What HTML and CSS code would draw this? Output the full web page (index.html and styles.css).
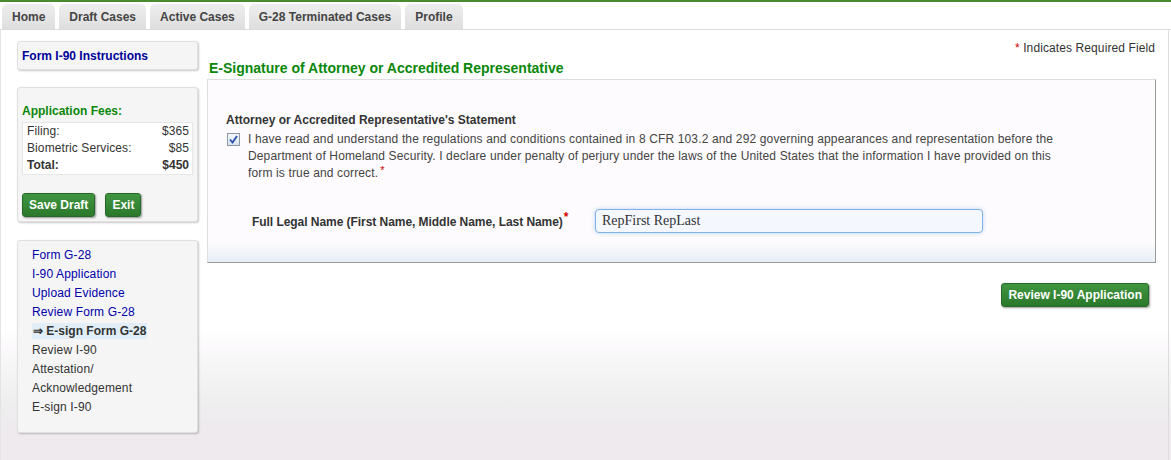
FILE: index.html
```html
<!DOCTYPE html>
<html lang="en">
<head>
    <meta charset="UTF-8">
    <title>E-Signature of Attorney</title>
    <link rel="stylesheet" href="styles.css">
</head>
<body>

<div class="topline"></div>

<!-- Tabs -->
<nav class="tabs">
    <a class="tab" href="#">Home</a>
    <a class="tab" href="#">Draft Cases</a>
    <a class="tab" href="#">Active Cases</a>
    <a class="tab" href="#">G-28 Terminated Cases</a>
    <a class="tab" href="#">Profile</a>
</nav>

<div class="page">
    <aside class="sidebar">
        <div class="box instr">
            <a href="#">Form I-90 Instructions</a>
        </div>

        <div class="box fees">
            <h3>Application Fees:</h3>
            <div class="fee-table">
                <div class="fee-row"><span>Filing:</span><span>$365</span></div>
                <div class="fee-row"><span>Biometric Services:</span><span>$85</span></div>
                <div class="fee-row total"><span>Total:</span><span>$450</span></div>
            </div>
            <div class="fee-actions">
                <button class="btn" type="button">Save Draft</button>
                <button class="btn" type="button">Exit</button>
            </div>
        </div>

        <div class="box steps">
            <ul>
                <li><a href="#">Form G-28</a></li>
                <li><a href="#">I-90 Application</a></li>
                <li><a href="#">Upload Evidence</a></li>
                <li><a href="#">Review Form G-28</a></li>
                <li class="current"><span>&rArr; E-sign Form G-28</span></li>
                <li>Review I-90</li>
                <li>Attestation/ Acknowledgement</li>
                <li>E-sign I-90</li>
            </ul>
        </div>
    </aside>

    <main class="content">
        <p class="req"><span class="star">*</span> Indicates Required Field</p>
        <h2 class="title">E-Signature of Attorney or Accredited Representative</h2>

        <section class="panel">
            <h4>Attorney or Accredited Representative's Statement</h4>
            <div class="statement">
                <span class="check">
                    <svg width="9" height="9" viewBox="0 0 9 9"><path d="M1 4.5 L3.5 7.5 L8 1" fill="none" stroke="#2a4fa8" stroke-width="1.8"/></svg>
                </span>
                <p>I have read and understand the regulations and conditions contained in 8 CFR 103.2 and 292 governing appearances and representation before the Department of Homeland Security. I declare under penalty of perjury under the laws of the United States that the information I have provided on this form is true and correct.<span class="star mark">*</span></p>
            </div>
            <div class="name-row">
                <label for="fullName">Full Legal Name (First Name, Middle Name, Last Name)<span class="star mark high">*</span></label>
                <input type="text" id="fullName" value="RepFirst RepLast">
            </div>
        </section>

        <div class="next">
            <button class="btn" type="button">Review I-90 Application</button>
        </div>
    </main>
</div>

</body>
</html>
```

FILE: styles.css
```css
body {
    margin: 0;
    font-family: "Liberation Sans", Arial, sans-serif;
    font-size: 12px;
    color: #333;
    min-height: 460px;
    background: linear-gradient(to bottom, #fff 0, #fff 330px, #fcfafc 345px, #f4f4f4 375px, #efefef 400px, #eeeaee 430px);
}
.topline {
    height: 2px;
    background: #4b8a2d;
}
.tabs {
    display: flex;
    gap: 4px;
    padding: 2px 0 0 2px;
    border-bottom: 1px solid #dcdcdc;
    background: #fff;
}
.tab {
    height: 25px;
    line-height: 26px;
    padding: 0 10px;
    background: linear-gradient(#eeeeee, #dedede);
    border-radius: 5px 5px 0 0;
    font-weight: bold;
    color: #444;
    text-decoration: none;
}
.page {
    display: flex;
    gap: 9px;
    width: 1169px;
    box-sizing: border-box;
    padding: 11px 0 0 16px;
    border-left: 1px solid #e4e4e4;
    border-right: 1px solid #dcdcdc;
    min-height: 430px;
}
.sidebar {
    width: 181px;
    flex-shrink: 0;
}
.box {
    background: #f5f5f5;
    border: 1px solid #e0e0e0;
    border-radius: 3px;
    box-shadow: 1px 1px 2px rgba(0,0,0,0.22);
}
.instr {
    height: 27px;
    line-height: 28px;
    padding: 0 4px;
}
.instr a {
    color: #000099;
    font-weight: bold;
    text-decoration: none;
}
.fees {
    margin-top: 17px;
    padding: 15px 4px 4px 4px;
}
.fees h3 {
    margin: 0 0 3px;
    font-size: 12px;
    line-height: 16px;
    color: #0a870a;
}
.fee-table {
    background: #fff;
    border: 1px solid #e6e6e6;
    padding: 0 3px 0 4px;
}
.fee-row {
    display: flex;
    justify-content: space-between;
    line-height: 17px;
    letter-spacing: 0.1px;
}
.fee-row.total {
    font-weight: bold;
    letter-spacing: 0;
}
.fee-actions {
    display: flex;
    gap: 10px;
    margin-top: 18px;
}
.btn {
    height: 24px;
    padding: 0 6px;
    font-family: "Liberation Sans", Arial, sans-serif;
    font-size: 12px;
    font-weight: bold;
    color: #fff;
    background: linear-gradient(#409640, #2b782b);
    border: 1px solid #26682a;
    border-radius: 3px;
    box-shadow: 1px 1px 2px rgba(0,0,0,0.4);
    cursor: pointer;
}
.steps {
    margin-top: 18px;
    padding: 5px 0 15px 14px;
}
.steps ul {
    list-style: none;
    margin: 0;
    padding: 0 12px 0 0;
}
.steps li {
    line-height: 19px;
    color: #333;
    letter-spacing: 0.14px;
}
.steps a {
    color: #0000aa;
    text-decoration: none;
}
.steps .current span {
    font-weight: bold;
    letter-spacing: 0;
    background: #e1eef7;
    padding: 1px 1px;
}
.content {
    width: 949px;
    flex-shrink: 0;
}
.req {
    margin: 0;
    text-align: right;
    line-height: 14px;
    padding-right: 1px;
    letter-spacing: 0.1px;
}
.star {
    color: #cc0000;
}
.mark {
    display: inline-block;
    margin-left: 2px;
    font-size: 11px;
    line-height: 10px;
    vertical-align: 3px;
}
.mark.high {
    font-size: 12px;
    vertical-align: 5px;
    margin-left: 1px;
}
.title {
    margin: 4px 0 2px;
    padding-left: 2px;
    font-size: 14px;
    line-height: 18px;
    color: #0a870a;
}
.panel {
    height: 184px;
    box-sizing: border-box;
    padding: 33px 18px 0 18px;
    border: 1px solid #dedede;
    border-right-color: #9a9a9a;
    border-bottom-color: #9a9a9a;
    background: linear-gradient(to bottom, #fdfbfd 0, #fdfbfd 162px, #e4edf4 184px);
}
.panel h4 {
    margin: 0;
    font-size: 12px;
    line-height: 15px;
    color: #333;
}
.statement {
    display: flex;
    margin-top: 3px;
}
.check {
    width: 11px;
    height: 11px;
    margin: 2px 8px 0 1px;
    border: 1px solid #8a98a8;
    background: linear-gradient(#f4f8fc, #d8e2ee);
    display: flex;
    align-items: center;
    justify-content: center;
    flex-shrink: 0;
}
.statement p {
    margin: 0;
    width: 815px;
    line-height: 17px;
    color: #444;
    letter-spacing: 0.14px;
}
.name-row {
    display: flex;
    margin-top: 27px;
    padding-left: 26px;
}
.name-row label {
    width: 343px;
    padding-top: 3px;
    font-weight: bold;
    color: #333;
    letter-spacing: -0.05px;
}
.name-row input {
    width: 388px;
    height: 24px;
    box-sizing: border-box;
    padding: 0 6px;
    border: 1px solid #7fb3e8;
    border-radius: 4px;
    background: #f4f8fe;
    box-shadow: 0 0 4px rgba(110,165,230,0.45);
    font-family: "Liberation Serif", "Times New Roman", serif;
    font-size: 14px;
    color: #333;
}
.next {
    display: flex;
    justify-content: flex-end;
    margin-top: 20px;
    padding-right: 7px;
}
```
